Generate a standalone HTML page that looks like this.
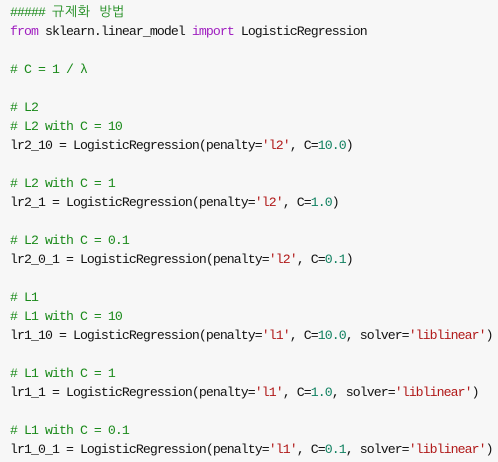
<!DOCTYPE html>
<html><head><meta charset="utf-8"><style>
html,body{margin:0;padding:0;background:#f7f7f7;width:498px;height:462px;overflow:hidden}
pre{margin:0;padding:3px 0 0 10px;font-family:"Liberation Mono","NanumGothic",monospace;font-size:13.2px;letter-spacing:-0.92px;line-height:19px;color:#111;white-space:pre}
.c{color:#1a8a1a}.k{color:#a020c0}.s{color:#b01818}.n{color:#108060}
.h{letter-spacing:0.5px}
</style></head><body><pre><span class="c">##### <span class="h">규제화 방법</span></span>
<span class="k">from</span> sklearn.linear_model <span class="k">import</span> LogisticRegression

<span class="c"># C = 1 / λ</span>

<span class="c"># L2</span>
<span class="c"># L2 with C = 10</span>
lr2_10 = LogisticRegression(penalty=<span class="s">'l2'</span>, C=<span class="n">10.0</span>)

<span class="c"># L2 with C = 1</span>
lr2_1 = LogisticRegression(penalty=<span class="s">'l2'</span>, C=<span class="n">1.0</span>)

<span class="c"># L2 with C = 0.1</span>
lr2_0_1 = LogisticRegression(penalty=<span class="s">'l2'</span>, C=<span class="n">0.1</span>)

<span class="c"># L1</span>
<span class="c"># L1 with C = 10</span>
lr1_10 = LogisticRegression(penalty=<span class="s">'l1'</span>, C=<span class="n">10.0</span>, solver=<span class="s">'liblinear'</span>)

<span class="c"># L1 with C = 1</span>
lr1_1 = LogisticRegression(penalty=<span class="s">'l1'</span>, C=<span class="n">1.0</span>, solver=<span class="s">'liblinear'</span>)

<span class="c"># L1 with C = 0.1</span>
lr1_0_1 = LogisticRegression(penalty=<span class="s">'l1'</span>, C=<span class="n">0.1</span>, solver=<span class="s">'liblinear'</span>)</pre></body></html>
